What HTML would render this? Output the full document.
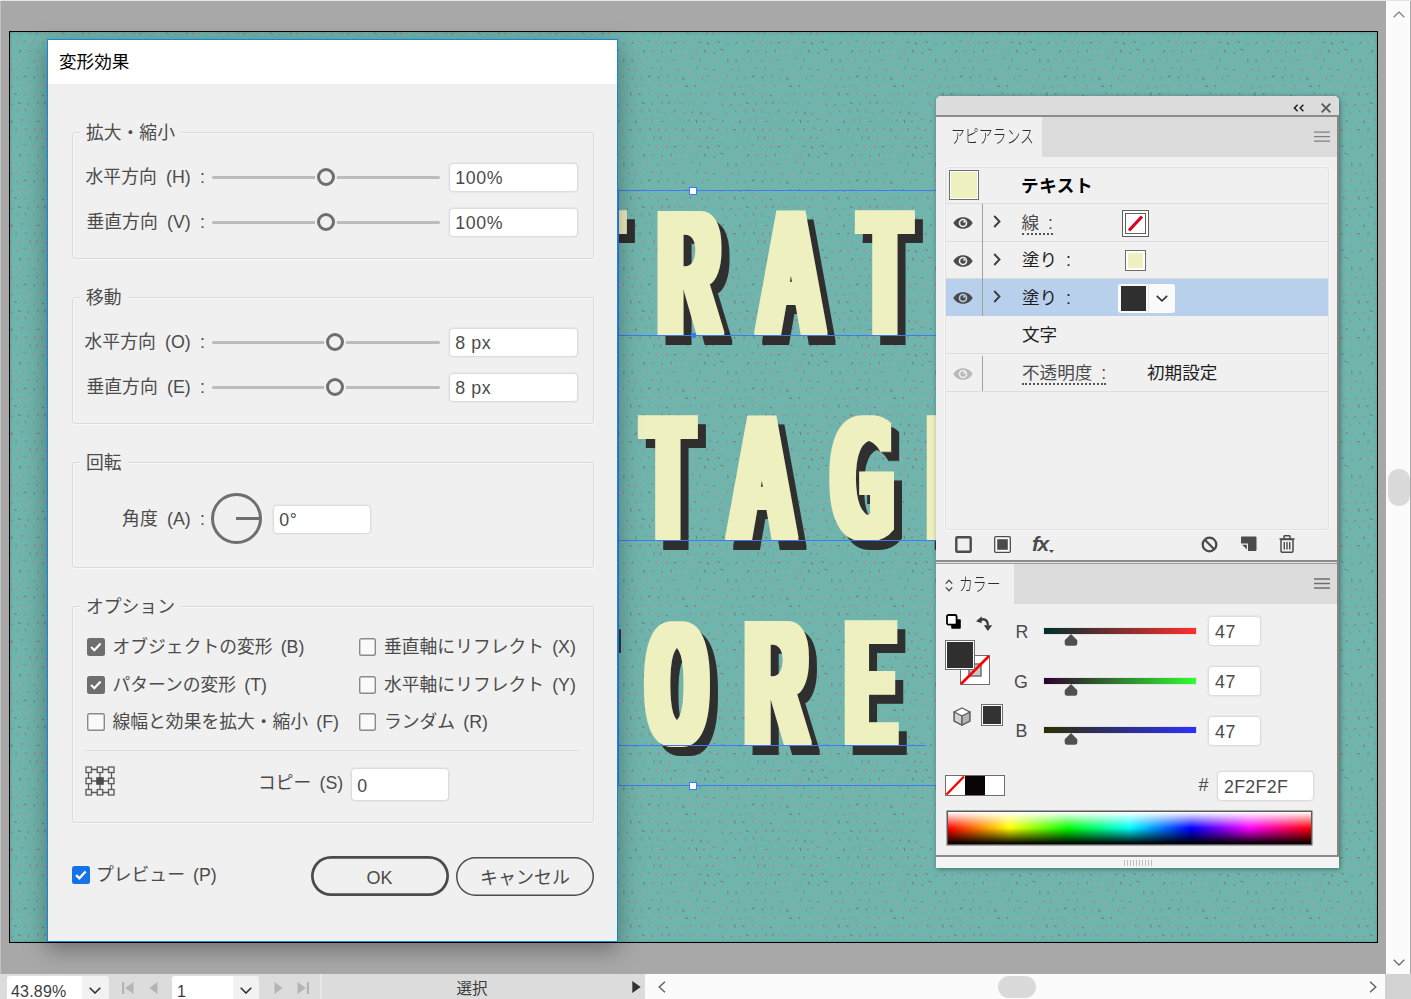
<!DOCTYPE html>
<html lang="ja">
<head>
<meta charset="utf-8">
<title>変形効果</title>
<style>
*{box-sizing:border-box;margin:0;padding:0}
html,body{width:1411px;height:999px;overflow:hidden}
body{position:relative;background:#a8a8a8;font-family:"Liberation Sans","Noto Sans CJK JP",sans-serif;font-size:17.5px;color:#4b4b4b}
.abs,.abs *{position:absolute}
.t{white-space:nowrap;line-height:1}
/* ---------- canvas ---------- */
#canvas{left:9px;top:31px;width:1369px;height:912px;border:1px solid #000;background:#6eb5ad;overflow:hidden}
#canvas svg.tex{left:0;top:0;width:1367px;height:910px}
#canvas .vig{left:0;top:0;width:1367px;height:910px;box-shadow:inset 0 0 3px 0 rgba(40,90,85,.35)}
.word .g{display:block;font-family:"Liberation Sans",sans-serif;font-weight:bold;font-size:176.6px;line-height:176.6px;height:176.6px;color:#eff0c0;white-space:pre;filter:url(#bold)}
.word .g.m{font-family:"DejaVu Sans Mono",monospace;font-size:161px;line-height:161px;height:161px;filter:url(#bold2)}
.word .g i{position:relative;display:block;font-style:normal;transform-origin:0 0}
#letters{left:0;top:0;width:1367px;height:910px}
.gl{height:1px;background:#3d7bf2}
.hd{width:8px;height:8px;background:#fff;border:1px solid #3d7bf2}

/* ---------- dialog ---------- */
#dialog{left:47px;top:39px;width:571px;height:903px;border:1px solid #1a84d8;background:#f0f0f0;box-shadow:0 7px 22px 0 rgba(0,0,0,.36)}
#dtitle{left:0;top:0;width:569px;height:44px;background:#fff}
.grp{left:24px;width:522px;border:1px solid #dadada;border-radius:3px;box-shadow:inset 1px 1px 0 #f8f8f8,1px 1px 0 #f8f8f8}
.leg{left:32px;padding:0 6px;background:#f0f0f0;font-size:17.8px;color:#4b4b4b}
.lbl{font-size:17.8px;color:#4b4b4b;word-spacing:3.2px}
.lbl.r{word-spacing:4.4px}
.lbl.r{right:412px}
.trk{left:164px;width:228px;height:3px;background:#bcbcbc;border-radius:1.5px}
.thumb{width:18px;height:18px;border-radius:50%;border:3px solid #6e6e6e;background:#f0f0f0;box-shadow:0 0 0 2px #f0f0f0}
.inp{width:129px;height:29px;background:#fff;border:1px solid #dcdcdc;border-radius:4px;box-shadow:0 0 0 1px #e8e8e8}
.inp span{left:5.2px;top:6px;font-size:17.8px;color:#4b4b4b;letter-spacing:.6px}
#dial{left:162.5px;top:452.5px;width:51.5px;height:51.5px;border-radius:50%;border:3px solid #6e6e6e}
#dial i{left:22.5px;top:21.2px;width:23px;height:3px;background:#6e6e6e}
.cb{width:17.6px;height:17.6px;box-shadow:inset 0 0 0 1.4px #8a8a8a;border-radius:2.5px;background:#fafafa}
.cb.on{background:#6e6e6e;box-shadow:none}
.cb.blue{background:#1473e6;box-shadow:none;width:18px;height:18px}
.cb svg{left:0;top:0;width:17.6px;height:17.6px}
#sep4{left:37px;top:709.5px;width:494px;height:1.5px;background:#dcdcdc}
#gridic{left:36.7px;top:726px}
.btn{height:40px;border-radius:20px;box-shadow:inset 0 0 0 1.5px #4b4b4b}
.btn span{font-size:18px;color:#4b4b4b}
#ok{left:262.5px;top:816px;width:138px;box-shadow:inset 0 0 0 2.7px #4b4b4b}
#ok span{left:56px;top:13px}
#cancel{left:408px;top:816.5px;width:138px;height:39px}
#cancel span{left:24px;top:12.5px}

/* ---------- panels ---------- */
#panel{left:936px;top:96px;width:403px;height:772px;background:#f0f0f0;border-radius:5px 5px 0 0;box-shadow:1px 1px 5px 0 rgba(0,0,0,.4);color:#1e1e1e}
#pstrip{left:0;top:0;width:403px;height:19px;background:#dcdcdc;border-radius:5px 5px 0 0}
#pcollapse{left:357px;top:7.7px}
#pclose{left:384.5px;top:6.7px}
#pline1{left:0;top:19px;width:403px;height:2px;background:#8c8c8c}
#panel:after{content:"";position:absolute;left:401px;top:19px;width:2px;height:741px;background:#868686}
.tabrow{left:0;width:401.5px;background:#dcdcdc}
.tab{left:0;background:#f0f0f0}
.nar{font-weight:300;font-size:18.6px;transform:scaleX(.745);transform-origin:0 50%;color:#2d2d2d;letter-spacing:0}
.burger{left:378px}
#plist{left:9px;top:70.5px;width:384px;height:363px;border:1px solid #e0e0e0;border-radius:3px;box-shadow:0 0 0 1px #f8f8f8}
#plist>*{margin-left:.5px}
.row{left:0;margin-left:0!important;width:382px;border-bottom:1.5px solid #dcdcdc}
.row.sel{background:#b9d0ed;border-bottom-color:#b9d0ed}
.vsep{left:35.5px;width:1.3px;background:#a0a0a0}
.sw{border:1px solid #6e6e6e}
.pl{font-size:17.6px;color:#1e1e1e}
.pl.b{font-weight:bold;color:#000}
.pl.dot{border-bottom:2px dotted #555;padding-bottom:.5px;word-spacing:4px}
.eye{left:6.5px}
.chev{left:46px;margin-top:-1.3px}
.sw2{width:27px;height:27px}
#selsw{left:171.5px;top:116px;width:57px;height:29px;background:#fafafa;border-radius:3px}
#selsw i{left:2.5px;top:2px;width:25px;height:25px;background:#2f2f2f}
#selsw b{left:30px;top:0;width:1px;height:29px;background:#e6e6e6}
#selsw svg{left:38px;top:11.5px}
#fx{font-family:"Liberation Sans",sans-serif;font-style:italic;font-size:21px;color:#4b4b4b;letter-spacing:-1.5px;font-weight:700;margin-top:2px}
#fx svg{left:17px;top:16.5px}
#pdiv{left:0;top:463.5px;width:403px;height:4.5px;background:linear-gradient(#8c8c8c 0,#8c8c8c 40%,#e6e6e6 40%,#e6e6e6 70%,#9a9a9a 70%)}
#fill{left:9px;top:544px;width:30px;height:30px;background:#2f2f2f;border:1px solid #6e6e6e;box-shadow:inset 0 0 0 1px #fff}
#stroke{left:24px;top:558.5px;width:30px;height:30px}
.ch{margin-top:1.2px;left:79.5px;font-size:17.8px;color:#4b4b4b}
.ctrk{left:107.5px;width:152px;height:6px;box-shadow:0 0 0 1px #e2e2e2}
.cth{left:128px}
.cinp{left:271.5px;width:53px;height:30px;background:#fff;border:1px solid #dcdcdc;border-radius:4px;box-shadow:0 0 0 1px #e8e8e8}
.cinp span{left:6.5px;top:7.3px;font-size:17.8px;color:#4b4b4b;letter-spacing:.6px}
#mini{left:9px;top:679px;width:60px;height:21px}
#spec{left:10.5px;top:714.5px;width:365px;height:34px;border:1px solid #5a5a5a;box-shadow:0 0 0 .5px #5a5a5a;background-clip:padding-box;background:linear-gradient(90deg,#f00 0,#ff0 17%,#0f0 33%,#0ff 50%,#00f 67%,#f0f 83%,#f00 100%)}
#spec i{left:0;top:0;right:0;bottom:0;background:linear-gradient(#fff 0,rgba(255,255,255,0) 50%,rgba(0,0,0,0) 50%,#000 100%)}
#pfoot{left:0;top:758.5px;width:403px;height:13.5px;background:#f4f4f4;border-top:2px solid #8c8c8c}
#pgrip{left:188px;top:763.5px;width:28px;height:6px;background:repeating-linear-gradient(90deg,#bdbdbd 0,#bdbdbd 1px,transparent 1px,transparent 3px)}

/* ---------- chrome ---------- */
#vscroll{left:1386px;top:1px;width:25px;height:973px;background:#fbfbfb;border-right:1px solid #a8a8a8}
#vthumb{left:2px;top:468px;width:21.5px;height:37px;border-radius:10.5px;background:#dadada}
#status{left:0;top:974px;width:1411px;height:25px;background:#dcdcdc}
.sinp{top:1.5px;height:24px;background:#fff;border-radius:3px 0 0 0}
.sinp span{top:8px;font-size:16px;color:#3c3c3c;letter-spacing:.2px}
.sdrop{top:1.5px;height:24px;background:#f2f2f2;border-radius:0 3px 0 0}
#ssep{left:320px;top:0;width:2px;height:25px;background:#e8e8e8}
#hscroll{left:645px;top:0;width:741px;height:25px;background:#fbfbfb}
#hthumb{left:353px;top:1.5px;width:38px;height:22px;border-radius:11px;background:#dadada}
#corner{left:1385px;top:0;width:26px;height:25px;background:#d2d2d2}
</style>
</head>
<body>
<div class="abs" id="topstrip" style="left:0;top:0;width:1411px;height:1px;background:#e4e4e4"></div>
<div class="abs" id="leftstrip" style="left:0;top:1px;width:1px;height:973px;background:#c2c2c2"></div>
<div class="abs" id="canvas">
<svg class="tex" width="1367" height="910">
<defs><pattern id="sp" width="104" height="104" patternUnits="userSpaceOnUse"><g fill="none" stroke-width="1.3" stroke-linecap="round">
<path d="M1.8 0.8l-0.4 0.8" stroke="#93a9a3" stroke-width="3" stroke-opacity="0.74"/>
<path d="M1.6 0.7l-1.6 0.7" stroke="#5b7a76" stroke-width="1.2" stroke-opacity="0.34"/>
<path d="M10.1 1.6l-0.8 0.5" stroke="#93a9a3" stroke-width="3" stroke-opacity="0.60"/>
<path d="M9.3 3.5l0.3 -1.8" stroke="#5b7a76" stroke-width="1.2" stroke-opacity="0.33"/>
<path d="M19.8 1.3l0.8 0.4" stroke="#93a9a3" stroke-width="3" stroke-opacity="0.64"/>
<path d="M20.2 0.4l0.3 1.8" stroke="#5b7a76" stroke-width="1.2" stroke-opacity="0.60"/>
<path d="M26.3 0.5l1.3 1.0" stroke="#93a9a3" stroke-width="3" stroke-opacity="0.69"/>
<path d="M27.2 0.8l-1.1 1.2" stroke="#5b7a76" stroke-width="1.2" stroke-opacity="0.68"/>
<path d="M36.1 1.3l-0.1 1.8" stroke="#93a9a3" stroke-width="3" stroke-opacity="0.83"/>
<path d="M36.3 3.0l-0.7 -0.9" stroke="#5b7a76" stroke-width="1.2" stroke-opacity="0.38"/>
<path d="M45.7 0.2l-0.9 1.5" stroke="#93a9a3" stroke-width="3" stroke-opacity="0.76"/>
<path d="M53.8 1.8l-0.4 1.4" stroke="#93a9a3" stroke-width="3" stroke-opacity="0.71"/>
<path d="M54.2 2.5l-0.9 -1.4" stroke="#5b7a76" stroke-width="1.2" stroke-opacity="0.69"/>
<path d="M63.5 2.9l-1.0 0.6" stroke="#93a9a3" stroke-width="3" stroke-opacity="0.67"/>
<path d="M63.3 2.6l-1.6 -0.1" stroke="#5b7a76" stroke-width="1.2" stroke-opacity="0.33"/>
<path d="M71.5 0.7l0.9 0.9" stroke="#93a9a3" stroke-width="3" stroke-opacity="0.89"/>
<path d="M73.1 0.9l-1.0 1.4" stroke="#5b7a76" stroke-width="1.2" stroke-opacity="0.78"/>
<path d="M79.1 1.0l0.8 1.7" stroke="#93a9a3" stroke-width="3" stroke-opacity="0.93"/>
<path d="M79.3 1.2l-0.6 1.2" stroke="#5b7a76" stroke-width="1.2" stroke-opacity="0.62"/>
<path d="M87.9 0.2l0.3 1.2" stroke="#93a9a3" stroke-width="3" stroke-opacity="0.75"/>
<path d="M98.1 1.3l-0.6 1.5" stroke="#93a9a3" stroke-width="3" stroke-opacity="0.52"/>
<path d="M7.5 11.2l-1.0 0.8" stroke="#93a9a3" stroke-width="3" stroke-opacity="0.68"/>
<path d="M6.6 11.6l-0.5 -1.0" stroke="#5b7a76" stroke-width="1.2" stroke-opacity="0.39"/>
<path d="M14.1 9.6l1.0 0.0" stroke="#93a9a3" stroke-width="3" stroke-opacity="0.55"/>
<path d="M13.9 8.4l1.8 1.3" stroke="#5b7a76" stroke-width="1.2" stroke-opacity="0.44"/>
<path d="M22.5 10.0l1.7 0.7" stroke="#93a9a3" stroke-width="3" stroke-opacity="0.95"/>
<path d="M22.8 9.6l-0.3 1.1" stroke="#5b7a76" stroke-width="1.2" stroke-opacity="0.45"/>
<path d="M32.2 9.8l1.9 0.1" stroke="#93a9a3" stroke-width="3" stroke-opacity="0.74"/>
<path d="M33.2 10.1l-0.1 1.0" stroke="#5b7a76" stroke-width="1.2" stroke-opacity="0.77"/>
<path d="M41.3 9.6l0.4 0.9" stroke="#93a9a3" stroke-width="3" stroke-opacity="0.85"/>
<path d="M41.8 10.6l-1.5 -0.0" stroke="#5b7a76" stroke-width="1.2" stroke-opacity="0.84"/>
<path d="M51.2 10.9l-1.4 0.9" stroke="#93a9a3" stroke-width="3" stroke-opacity="0.60"/>
<path d="M50.2 11.4l-0.8 -0.6" stroke="#5b7a76" stroke-width="1.2" stroke-opacity="0.44"/>
<path d="M58.6 10.8l0.3 1.9" stroke="#93a9a3" stroke-width="3" stroke-opacity="0.94"/>
<path d="M66.3 9.7l0.8 0.7" stroke="#93a9a3" stroke-width="3" stroke-opacity="0.59"/>
<path d="M67.7 10.0l-2.1 0.5" stroke="#5b7a76" stroke-width="1.2" stroke-opacity="0.74"/>
<path d="M75.5 10.8l-1.7 0.5" stroke="#93a9a3" stroke-width="3" stroke-opacity="0.84"/>
<path d="M75.2 12.2l-1.7 -1.3" stroke="#5b7a76" stroke-width="1.2" stroke-opacity="0.83"/>
<path d="M84.9 10.3l-1.6 0.3" stroke="#93a9a3" stroke-width="3" stroke-opacity="0.58"/>
<path d="M85.4 10.6l-1.7 -1.5" stroke="#5b7a76" stroke-width="1.2" stroke-opacity="0.75"/>
<path d="M93.8 10.4l0.7 1.3" stroke="#93a9a3" stroke-width="3" stroke-opacity="0.56"/>
<path d="M95.1 12.0l-1.8 -0.6" stroke="#5b7a76" stroke-width="1.2" stroke-opacity="0.54"/>
<path d="M102.1 11.1l0.9 0.7" stroke="#93a9a3" stroke-width="3" stroke-opacity="0.63"/>
<path d="M102.9 10.4l-0.9 1.0" stroke="#5b7a76" stroke-width="1.2" stroke-opacity="0.80"/>
<path d="M1.9 18.3l-0.5 1.8" stroke="#93a9a3" stroke-width="3" stroke-opacity="0.69"/>
<path d="M10.7 19.0l-0.1 0.8" stroke="#93a9a3" stroke-width="3" stroke-opacity="0.70"/>
<path d="M10.8 18.5l-1.3 1.6" stroke="#5b7a76" stroke-width="1.2" stroke-opacity="0.70"/>
<path d="M19.5 18.2l-0.1 1.5" stroke="#93a9a3" stroke-width="3" stroke-opacity="0.85"/>
<path d="M19.8 19.4l-1.3 -0.1" stroke="#5b7a76" stroke-width="1.2" stroke-opacity="0.58"/>
<path d="M28.8 19.8l-1.3 0.4" stroke="#93a9a3" stroke-width="3" stroke-opacity="0.78"/>
<path d="M28.4 20.9l-0.6 -1.9" stroke="#5b7a76" stroke-width="1.2" stroke-opacity="0.56"/>
<path d="M38.6 19.4l-1.8 0.7" stroke="#93a9a3" stroke-width="3" stroke-opacity="0.62"/>
<path d="M36.8 20.2l0.7 -2.1" stroke="#5b7a76" stroke-width="1.2" stroke-opacity="0.54"/>
<path d="M43.5 18.5l1.6 0.4" stroke="#93a9a3" stroke-width="3" stroke-opacity="0.85"/>
<path d="M53.4 19.4l-0.5 0.9" stroke="#93a9a3" stroke-width="3" stroke-opacity="0.90"/>
<path d="M61.8 19.8l0.4 1.3" stroke="#93a9a3" stroke-width="3" stroke-opacity="0.95"/>
<path d="M62.5 19.5l-0.9 1.3" stroke="#5b7a76" stroke-width="1.2" stroke-opacity="0.41"/>
<path d="M70.2 19.8l1.5 0.1" stroke="#93a9a3" stroke-width="3" stroke-opacity="0.70"/>
<path d="M70.6 18.3l0.6 1.8" stroke="#5b7a76" stroke-width="1.2" stroke-opacity="0.84"/>
<path d="M80.2 20.3l1.1 0.4" stroke="#93a9a3" stroke-width="3" stroke-opacity="0.52"/>
<path d="M80.5 20.5l0.2 1.2" stroke="#5b7a76" stroke-width="1.2" stroke-opacity="0.75"/>
<path d="M88.8 18.3l-1.4 0.4" stroke="#93a9a3" stroke-width="3" stroke-opacity="0.82"/>
<path d="M88.9 18.2l-1.8 -0.9" stroke="#5b7a76" stroke-width="1.2" stroke-opacity="0.82"/>
<path d="M96.8 19.8l1.8 0.5" stroke="#93a9a3" stroke-width="3" stroke-opacity="0.53"/>
<path d="M6.4 26.7l-0.3 1.9" stroke="#93a9a3" stroke-width="3" stroke-opacity="0.62"/>
<path d="M6.3 27.2l-1.3 -0.2" stroke="#5b7a76" stroke-width="1.2" stroke-opacity="0.33"/>
<path d="M13.8 26.8l1.0 1.4" stroke="#93a9a3" stroke-width="3" stroke-opacity="0.63"/>
<path d="M13.7 26.4l-0.4 1.4" stroke="#5b7a76" stroke-width="1.2" stroke-opacity="0.31"/>
<path d="M23.7 27.7l1.1 0.8" stroke="#93a9a3" stroke-width="3" stroke-opacity="0.92"/>
<path d="M24.9 28.3l-1.4 0.7" stroke="#5b7a76" stroke-width="1.2" stroke-opacity="0.52"/>
<path d="M33.0 28.4l-1.2 0.1" stroke="#93a9a3" stroke-width="3" stroke-opacity="0.87"/>
<path d="M32.0 28.5l0.2 -1.6" stroke="#5b7a76" stroke-width="1.2" stroke-opacity="0.37"/>
<path d="M39.6 28.2l0.7 0.7" stroke="#93a9a3" stroke-width="3" stroke-opacity="0.54"/>
<path d="M40.6 28.0l-1.9 0.3" stroke="#5b7a76" stroke-width="1.2" stroke-opacity="0.46"/>
<path d="M49.5 26.6l0.2 1.1" stroke="#93a9a3" stroke-width="3" stroke-opacity="0.93"/>
<path d="M59.0 27.3l-1.2 0.1" stroke="#93a9a3" stroke-width="3" stroke-opacity="0.66"/>
<path d="M58.8 27.7l-0.6 -1.5" stroke="#5b7a76" stroke-width="1.2" stroke-opacity="0.58"/>
<path d="M65.2 27.3l1.2 0.4" stroke="#93a9a3" stroke-width="3" stroke-opacity="0.52"/>
<path d="M65.9 26.8l0.2 1.3" stroke="#5b7a76" stroke-width="1.2" stroke-opacity="0.71"/>
<path d="M76.6 28.3l-1.2 0.5" stroke="#93a9a3" stroke-width="3" stroke-opacity="0.65"/>
<path d="M83.7 28.2l-0.4 0.8" stroke="#93a9a3" stroke-width="3" stroke-opacity="0.88"/>
<path d="M93.7 28.3l-0.8 0.5" stroke="#93a9a3" stroke-width="3" stroke-opacity="0.74"/>
<path d="M93.9 29.8l-0.1 -2.1" stroke="#5b7a76" stroke-width="1.2" stroke-opacity="0.79"/>
<path d="M101.8 28.2l0.6 0.6" stroke="#93a9a3" stroke-width="3" stroke-opacity="0.56"/>
<path d="M102.1 27.6l0.1 2.2" stroke="#5b7a76" stroke-width="1.2" stroke-opacity="0.64"/>
<path d="M1.6 36.6l1.8 0.0" stroke="#93a9a3" stroke-width="3" stroke-opacity="0.84"/>
<path d="M1.7 36.1l-0.0 1.9" stroke="#5b7a76" stroke-width="1.2" stroke-opacity="0.44"/>
<path d="M10.0 35.7l-0.7 0.8" stroke="#93a9a3" stroke-width="3" stroke-opacity="0.83"/>
<path d="M19.3 35.6l0.1 1.6" stroke="#93a9a3" stroke-width="3" stroke-opacity="0.85"/>
<path d="M19.3 36.1l-1.1 -0.1" stroke="#5b7a76" stroke-width="1.2" stroke-opacity="0.71"/>
<path d="M27.1 36.8l0.9 0.0" stroke="#93a9a3" stroke-width="3" stroke-opacity="0.62"/>
<path d="M27.5 35.9l-0.6 1.9" stroke="#5b7a76" stroke-width="1.2" stroke-opacity="0.56"/>
<path d="M37.1 35.6l-1.0 0.3" stroke="#93a9a3" stroke-width="3" stroke-opacity="0.94"/>
<path d="M45.0 36.0l-1.7 1.1" stroke="#93a9a3" stroke-width="3" stroke-opacity="0.70"/>
<path d="M44.8 37.2l-2.1 -0.9" stroke="#5b7a76" stroke-width="1.2" stroke-opacity="0.38"/>
<path d="M53.2 37.4l1.6 0.7" stroke="#93a9a3" stroke-width="3" stroke-opacity="0.73"/>
<path d="M63.8 35.8l-1.3 0.4" stroke="#93a9a3" stroke-width="3" stroke-opacity="0.51"/>
<path d="M63.2 36.2l-0.6 -1.5" stroke="#5b7a76" stroke-width="1.2" stroke-opacity="0.49"/>
<path d="M70.0 37.5l1.7 0.0" stroke="#93a9a3" stroke-width="3" stroke-opacity="0.88"/>
<path d="M72.2 36.4l-1.3 1.5" stroke="#5b7a76" stroke-width="1.2" stroke-opacity="0.50"/>
<path d="M79.9 37.3l-0.3 1.2" stroke="#93a9a3" stroke-width="3" stroke-opacity="0.69"/>
<path d="M80.7 37.2l-0.9 0.6" stroke="#5b7a76" stroke-width="1.2" stroke-opacity="0.81"/>
<path d="M88.1 35.6l-0.0 1.0" stroke="#93a9a3" stroke-width="3" stroke-opacity="0.67"/>
<path d="M98.6 36.5l-0.8 1.7" stroke="#93a9a3" stroke-width="3" stroke-opacity="0.92"/>
<path d="M99.0 37.7l-0.8 -0.7" stroke="#5b7a76" stroke-width="1.2" stroke-opacity="0.71"/>
<path d="M5.7 44.7l1.9 0.3" stroke="#93a9a3" stroke-width="3" stroke-opacity="0.56"/>
<path d="M6.9 44.9l0.3 1.4" stroke="#5b7a76" stroke-width="1.2" stroke-opacity="0.44"/>
<path d="M15.5 44.2l-0.2 1.3" stroke="#93a9a3" stroke-width="3" stroke-opacity="0.58"/>
<path d="M16.4 43.9l-2.1 0.9" stroke="#5b7a76" stroke-width="1.2" stroke-opacity="0.80"/>
<path d="M24.4 45.0l0.9 0.4" stroke="#93a9a3" stroke-width="3" stroke-opacity="0.54"/>
<path d="M24.2 44.7l0.5 1.2" stroke="#5b7a76" stroke-width="1.2" stroke-opacity="0.79"/>
<path d="M32.7 44.4l0.4 1.4" stroke="#93a9a3" stroke-width="3" stroke-opacity="0.67"/>
<path d="M34.0 43.9l-0.6 1.3" stroke="#5b7a76" stroke-width="1.2" stroke-opacity="0.58"/>
<path d="M40.9 45.9l0.9 0.7" stroke="#93a9a3" stroke-width="3" stroke-opacity="0.61"/>
<path d="M42.4 45.8l-1.1 2.0" stroke="#5b7a76" stroke-width="1.2" stroke-opacity="0.31"/>
<path d="M49.2 45.6l-1.3 0.4" stroke="#93a9a3" stroke-width="3" stroke-opacity="0.76"/>
<path d="M49.7 47.4l-1.3 -1.9" stroke="#5b7a76" stroke-width="1.2" stroke-opacity="0.83"/>
<path d="M57.1 44.1l1.3 0.7" stroke="#93a9a3" stroke-width="3" stroke-opacity="0.81"/>
<path d="M68.0 45.2l-1.0 0.9" stroke="#93a9a3" stroke-width="3" stroke-opacity="0.75"/>
<path d="M68.4 46.6l-0.4 -1.3" stroke="#5b7a76" stroke-width="1.2" stroke-opacity="0.47"/>
<path d="M75.1 44.0l-0.7 1.5" stroke="#93a9a3" stroke-width="3" stroke-opacity="0.55"/>
<path d="M75.4 44.7l-1.7 -0.7" stroke="#5b7a76" stroke-width="1.2" stroke-opacity="0.63"/>
<path d="M83.0 43.9l0.2 1.9" stroke="#93a9a3" stroke-width="3" stroke-opacity="0.79"/>
<path d="M92.2 44.0l1.4 1.4" stroke="#93a9a3" stroke-width="3" stroke-opacity="0.82"/>
<path d="M93.1 43.7l0.3 1.7" stroke="#5b7a76" stroke-width="1.2" stroke-opacity="0.44"/>
<path d="M101.8 46.1l0.6 0.5" stroke="#93a9a3" stroke-width="3" stroke-opacity="0.65"/>
<path d="M103.1 46.4l-1.1 0.7" stroke="#5b7a76" stroke-width="1.2" stroke-opacity="0.58"/>
<path d="M0.8 54.4l1.0 1.5" stroke="#93a9a3" stroke-width="3" stroke-opacity="0.60"/>
<path d="M2.7 55.0l-1.4 0.3" stroke="#5b7a76" stroke-width="1.2" stroke-opacity="0.40"/>
<path d="M10.5 53.0l-1.0 1.7" stroke="#93a9a3" stroke-width="3" stroke-opacity="0.57"/>
<path d="M10.6 53.0l-2.4 0.2" stroke="#5b7a76" stroke-width="1.2" stroke-opacity="0.33"/>
<path d="M19.9 54.7l-1.6 0.6" stroke="#93a9a3" stroke-width="3" stroke-opacity="0.95"/>
<path d="M28.4 53.1l-1.7 0.3" stroke="#93a9a3" stroke-width="3" stroke-opacity="0.51"/>
<path d="M27.7 53.4l-0.7 -1.3" stroke="#5b7a76" stroke-width="1.2" stroke-opacity="0.30"/>
<path d="M36.6 53.6l-0.9 0.1" stroke="#93a9a3" stroke-width="3" stroke-opacity="0.93"/>
<path d="M37.1 54.5l-1.0 -1.9" stroke="#5b7a76" stroke-width="1.2" stroke-opacity="0.33"/>
<path d="M45.8 53.6l-1.0 0.3" stroke="#93a9a3" stroke-width="3" stroke-opacity="0.66"/>
<path d="M53.6 53.3l-1.4 1.0" stroke="#93a9a3" stroke-width="3" stroke-opacity="0.52"/>
<path d="M53.6 54.3l-2.3 -0.3" stroke="#5b7a76" stroke-width="1.2" stroke-opacity="0.79"/>
<path d="M63.0 53.4l-1.5 0.2" stroke="#93a9a3" stroke-width="3" stroke-opacity="0.62"/>
<path d="M61.8 54.5l-0.7 -1.2" stroke="#5b7a76" stroke-width="1.2" stroke-opacity="0.80"/>
<path d="M71.1 55.0l1.1 0.1" stroke="#93a9a3" stroke-width="3" stroke-opacity="0.71"/>
<path d="M80.6 53.3l0.9 0.9" stroke="#93a9a3" stroke-width="3" stroke-opacity="0.72"/>
<path d="M88.5 54.1l-1.2 1.3" stroke="#93a9a3" stroke-width="3" stroke-opacity="0.85"/>
<path d="M88.4 55.4l-1.4 -0.5" stroke="#5b7a76" stroke-width="1.2" stroke-opacity="0.34"/>
<path d="M96.3 54.3l0.6 0.6" stroke="#93a9a3" stroke-width="3" stroke-opacity="0.52"/>
<path d="M97.7 54.3l-0.9 2.2" stroke="#5b7a76" stroke-width="1.2" stroke-opacity="0.45"/>
<path d="M5.3 60.9l0.0 1.7" stroke="#93a9a3" stroke-width="3" stroke-opacity="0.70"/>
<path d="M6.5 61.9l-1.8 0.4" stroke="#5b7a76" stroke-width="1.2" stroke-opacity="0.77"/>
<path d="M15.9 61.5l-1.0 0.6" stroke="#93a9a3" stroke-width="3" stroke-opacity="0.76"/>
<path d="M15.1 62.0l-0.2 -1.3" stroke="#5b7a76" stroke-width="1.2" stroke-opacity="0.38"/>
<path d="M24.3 62.3l0.7 1.1" stroke="#93a9a3" stroke-width="3" stroke-opacity="0.95"/>
<path d="M25.3 62.7l-1.0 1.9" stroke="#5b7a76" stroke-width="1.2" stroke-opacity="0.36"/>
<path d="M33.1 63.0l-1.7 0.9" stroke="#93a9a3" stroke-width="3" stroke-opacity="0.52"/>
<path d="M33.6 63.8l-1.2 -0.4" stroke="#5b7a76" stroke-width="1.2" stroke-opacity="0.81"/>
<path d="M40.6 63.0l0.2 1.1" stroke="#93a9a3" stroke-width="3" stroke-opacity="0.85"/>
<path d="M48.9 62.4l-0.4 1.0" stroke="#93a9a3" stroke-width="3" stroke-opacity="0.67"/>
<path d="M49.5 63.0l-1.3 0.3" stroke="#5b7a76" stroke-width="1.2" stroke-opacity="0.41"/>
<path d="M57.4 61.8l-0.5 0.9" stroke="#93a9a3" stroke-width="3" stroke-opacity="0.64"/>
<path d="M56.9 62.4l-0.9 -1.5" stroke="#5b7a76" stroke-width="1.2" stroke-opacity="0.52"/>
<path d="M66.6 62.9l1.0 0.3" stroke="#93a9a3" stroke-width="3" stroke-opacity="0.81"/>
<path d="M67.7 62.0l0.2 1.4" stroke="#5b7a76" stroke-width="1.2" stroke-opacity="0.61"/>
<path d="M76.2 62.1l-1.8 0.8" stroke="#93a9a3" stroke-width="3" stroke-opacity="0.66"/>
<path d="M74.6 63.7l-0.1 -1.3" stroke="#5b7a76" stroke-width="1.2" stroke-opacity="0.53"/>
<path d="M85.7 62.2l-1.3 0.5" stroke="#93a9a3" stroke-width="3" stroke-opacity="0.57"/>
<path d="M86.1 62.7l-0.6 -1.8" stroke="#5b7a76" stroke-width="1.2" stroke-opacity="0.64"/>
<path d="M92.2 62.4l1.0 0.5" stroke="#93a9a3" stroke-width="3" stroke-opacity="0.73"/>
<path d="M101.5 62.1l-1.6 1.1" stroke="#93a9a3" stroke-width="3" stroke-opacity="0.59"/>
<path d="M100.6 63.1l0.3 -2.4" stroke="#5b7a76" stroke-width="1.2" stroke-opacity="0.81"/>
<path d="M2.1 71.5l-0.7 1.7" stroke="#93a9a3" stroke-width="3" stroke-opacity="0.57"/>
<path d="M3.1 72.7l-1.5 0.3" stroke="#5b7a76" stroke-width="1.2" stroke-opacity="0.40"/>
<path d="M10.0 70.5l-0.1 1.3" stroke="#93a9a3" stroke-width="3" stroke-opacity="0.56"/>
<path d="M10.3 71.6l-2.1 -0.9" stroke="#5b7a76" stroke-width="1.2" stroke-opacity="0.72"/>
<path d="M17.5 71.9l1.4 0.5" stroke="#93a9a3" stroke-width="3" stroke-opacity="0.75"/>
<path d="M18.3 71.2l0.1 1.6" stroke="#5b7a76" stroke-width="1.2" stroke-opacity="0.66"/>
<path d="M27.1 71.1l1.5 0.1" stroke="#93a9a3" stroke-width="3" stroke-opacity="0.72"/>
<path d="M28.3 69.7l-1.0 1.9" stroke="#5b7a76" stroke-width="1.2" stroke-opacity="0.56"/>
<path d="M35.6 70.0l0.2 0.9" stroke="#93a9a3" stroke-width="3" stroke-opacity="0.70"/>
<path d="M35.5 70.0l-0.8 1.7" stroke="#5b7a76" stroke-width="1.2" stroke-opacity="0.73"/>
<path d="M45.4 69.6l-0.0 1.3" stroke="#93a9a3" stroke-width="3" stroke-opacity="0.93"/>
<path d="M46.7 71.4l-2.0 -1.3" stroke="#5b7a76" stroke-width="1.2" stroke-opacity="0.41"/>
<path d="M56.1 71.2l-1.9 0.3" stroke="#93a9a3" stroke-width="3" stroke-opacity="0.57"/>
<path d="M54.6 72.2l0.6 -0.9" stroke="#5b7a76" stroke-width="1.2" stroke-opacity="0.39"/>
<path d="M64.0 70.5l-0.8 0.5" stroke="#93a9a3" stroke-width="3" stroke-opacity="0.73"/>
<path d="M70.6 70.2l-0.0 1.2" stroke="#93a9a3" stroke-width="3" stroke-opacity="0.52"/>
<path d="M71.8 70.7l-1.8 1.4" stroke="#5b7a76" stroke-width="1.2" stroke-opacity="0.39"/>
<path d="M80.8 69.6l-0.2 1.6" stroke="#93a9a3" stroke-width="3" stroke-opacity="0.66"/>
<path d="M89.2 71.4l-0.9 0.3" stroke="#93a9a3" stroke-width="3" stroke-opacity="0.95"/>
<path d="M89.0 73.2l-1.2 -1.7" stroke="#5b7a76" stroke-width="1.2" stroke-opacity="0.62"/>
<path d="M96.9 71.5l0.2 1.0" stroke="#93a9a3" stroke-width="3" stroke-opacity="0.83"/>
<path d="M97.9 73.0l-1.3 -0.4" stroke="#5b7a76" stroke-width="1.2" stroke-opacity="0.62"/>
<path d="M6.3 79.5l0.8 0.0" stroke="#93a9a3" stroke-width="3" stroke-opacity="0.57"/>
<path d="M7.2 78.1l0.3 1.7" stroke="#5b7a76" stroke-width="1.2" stroke-opacity="0.42"/>
<path d="M14.8 78.8l1.2 0.0" stroke="#93a9a3" stroke-width="3" stroke-opacity="0.55"/>
<path d="M15.0 77.6l1.0 1.5" stroke="#5b7a76" stroke-width="1.2" stroke-opacity="0.64"/>
<path d="M24.1 79.0l-1.1 0.2" stroke="#93a9a3" stroke-width="3" stroke-opacity="0.57"/>
<path d="M24.1 80.1l-0.0 -2.2" stroke="#5b7a76" stroke-width="1.2" stroke-opacity="0.45"/>
<path d="M31.3 79.7l-0.2 1.2" stroke="#93a9a3" stroke-width="3" stroke-opacity="0.79"/>
<path d="M31.4 81.8l-1.2 -1.6" stroke="#5b7a76" stroke-width="1.2" stroke-opacity="0.32"/>
<path d="M40.8 79.5l0.6 0.6" stroke="#93a9a3" stroke-width="3" stroke-opacity="0.85"/>
<path d="M41.3 78.5l-1.6 1.7" stroke="#5b7a76" stroke-width="1.2" stroke-opacity="0.63"/>
<path d="M50.1 80.1l-0.8 0.6" stroke="#93a9a3" stroke-width="3" stroke-opacity="0.64"/>
<path d="M51.3 80.8l-2.2 -0.2" stroke="#5b7a76" stroke-width="1.2" stroke-opacity="0.30"/>
<path d="M59.1 79.7l0.2 1.7" stroke="#93a9a3" stroke-width="3" stroke-opacity="0.70"/>
<path d="M58.8 79.8l-0.8 1.0" stroke="#5b7a76" stroke-width="1.2" stroke-opacity="0.71"/>
<path d="M67.8 80.4l-0.7 0.9" stroke="#93a9a3" stroke-width="3" stroke-opacity="0.75"/>
<path d="M67.5 81.8l-0.8 -1.6" stroke="#5b7a76" stroke-width="1.2" stroke-opacity="0.83"/>
<path d="M74.4 80.9l1.1 0.1" stroke="#93a9a3" stroke-width="3" stroke-opacity="0.61"/>
<path d="M75.4 80.8l-1.4 1.5" stroke="#5b7a76" stroke-width="1.2" stroke-opacity="0.48"/>
<path d="M84.0 80.2l-0.7 1.5" stroke="#93a9a3" stroke-width="3" stroke-opacity="0.80"/>
<path d="M93.5 80.1l-1.1 1.5" stroke="#93a9a3" stroke-width="3" stroke-opacity="0.70"/>
<path d="M93.0 81.5l-1.1 -0.9" stroke="#5b7a76" stroke-width="1.2" stroke-opacity="0.34"/>
<path d="M102.2 79.1l0.9 0.1" stroke="#93a9a3" stroke-width="3" stroke-opacity="0.92"/>
<path d="M101.6 79.0l0.6 0.8" stroke="#5b7a76" stroke-width="1.2" stroke-opacity="0.65"/>
<path d="M1.7 89.1l1.5 0.3" stroke="#93a9a3" stroke-width="3" stroke-opacity="0.66"/>
<path d="M2.5 89.0l-1.5 1.7" stroke="#5b7a76" stroke-width="1.2" stroke-opacity="0.80"/>
<path d="M11.4 87.4l0.7 0.6" stroke="#93a9a3" stroke-width="3" stroke-opacity="0.52"/>
<path d="M13.1 87.5l-1.7 0.8" stroke="#5b7a76" stroke-width="1.2" stroke-opacity="0.46"/>
<path d="M18.8 87.3l-0.8 0.7" stroke="#93a9a3" stroke-width="3" stroke-opacity="0.64"/>
<path d="M18.7 88.0l-1.3 0.2" stroke="#5b7a76" stroke-width="1.2" stroke-opacity="0.50"/>
<path d="M27.6 88.9l-0.0 1.8" stroke="#93a9a3" stroke-width="3" stroke-opacity="0.78"/>
<path d="M28.8 89.4l-1.6 0.3" stroke="#5b7a76" stroke-width="1.2" stroke-opacity="0.69"/>
<path d="M37.2 87.8l-0.8 0.4" stroke="#93a9a3" stroke-width="3" stroke-opacity="0.87"/>
<path d="M37.8 88.9l-1.3 -0.2" stroke="#5b7a76" stroke-width="1.2" stroke-opacity="0.30"/>
<path d="M45.7 88.3l-0.8 0.6" stroke="#93a9a3" stroke-width="3" stroke-opacity="0.72"/>
<path d="M46.1 89.0l-0.2 -1.4" stroke="#5b7a76" stroke-width="1.2" stroke-opacity="0.42"/>
<path d="M53.7 88.4l1.5 0.5" stroke="#93a9a3" stroke-width="3" stroke-opacity="0.54"/>
<path d="M55.3 87.6l-1.2 1.7" stroke="#5b7a76" stroke-width="1.2" stroke-opacity="0.52"/>
<path d="M61.5 89.4l1.8 0.5" stroke="#93a9a3" stroke-width="3" stroke-opacity="0.51"/>
<path d="M62.2 88.3l0.5 2.2" stroke="#5b7a76" stroke-width="1.2" stroke-opacity="0.79"/>
<path d="M70.8 87.7l-0.2 1.7" stroke="#93a9a3" stroke-width="3" stroke-opacity="0.84"/>
<path d="M70.8 88.9l-1.4 0.4" stroke="#5b7a76" stroke-width="1.2" stroke-opacity="0.66"/>
<path d="M80.4 87.0l0.3 1.7" stroke="#93a9a3" stroke-width="3" stroke-opacity="0.76"/>
<path d="M81.2 87.0l-2.1 0.7" stroke="#5b7a76" stroke-width="1.2" stroke-opacity="0.47"/>
<path d="M88.7 89.3l0.9 0.5" stroke="#93a9a3" stroke-width="3" stroke-opacity="0.61"/>
<path d="M89.1 88.4l-0.5 1.1" stroke="#5b7a76" stroke-width="1.2" stroke-opacity="0.84"/>
<path d="M98.3 87.7l-0.9 0.1" stroke="#93a9a3" stroke-width="3" stroke-opacity="0.67"/>
<path d="M6.9 97.4l0.2 1.0" stroke="#93a9a3" stroke-width="3" stroke-opacity="0.79"/>
<path d="M6.8 97.2l-1.1 1.1" stroke="#5b7a76" stroke-width="1.2" stroke-opacity="0.74"/>
<path d="M15.7 96.7l-0.5 1.2" stroke="#93a9a3" stroke-width="3" stroke-opacity="0.56"/>
<path d="M17.1 97.4l-2.0 -0.4" stroke="#5b7a76" stroke-width="1.2" stroke-opacity="0.62"/>
<path d="M23.6 96.6l1.3 1.1" stroke="#93a9a3" stroke-width="3" stroke-opacity="0.90"/>
<path d="M25.5 96.8l-1.9 1.2" stroke="#5b7a76" stroke-width="1.2" stroke-opacity="0.55"/>
<path d="M31.3 97.4l1.2 0.4" stroke="#93a9a3" stroke-width="3" stroke-opacity="0.85"/>
<path d="M32.1 97.0l-0.6 1.2" stroke="#5b7a76" stroke-width="1.2" stroke-opacity="0.64"/>
<path d="M41.3 97.6l-1.0 0.2" stroke="#93a9a3" stroke-width="3" stroke-opacity="0.79"/>
<path d="M41.9 97.8l-0.8 -1.5" stroke="#5b7a76" stroke-width="1.2" stroke-opacity="0.60"/>
<path d="M49.6 97.9l-1.4 0.3" stroke="#93a9a3" stroke-width="3" stroke-opacity="0.55"/>
<path d="M49.1 99.2l-0.4 -2.0" stroke="#5b7a76" stroke-width="1.2" stroke-opacity="0.76"/>
<path d="M58.9 97.0l-1.0 0.2" stroke="#93a9a3" stroke-width="3" stroke-opacity="0.81"/>
<path d="M59.0 97.5l0.3 -1.1" stroke="#5b7a76" stroke-width="1.2" stroke-opacity="0.33"/>
<path d="M65.8 97.1l1.3 0.1" stroke="#93a9a3" stroke-width="3" stroke-opacity="0.69"/>
<path d="M65.8 96.8l0.4 1.3" stroke="#5b7a76" stroke-width="1.2" stroke-opacity="0.82"/>
<path d="M76.2 96.3l-1.0 0.7" stroke="#93a9a3" stroke-width="3" stroke-opacity="0.60"/>
<path d="M76.2 97.7l-0.4 -2.1" stroke="#5b7a76" stroke-width="1.2" stroke-opacity="0.61"/>
<path d="M83.3 97.7l0.7 1.4" stroke="#93a9a3" stroke-width="3" stroke-opacity="0.87"/>
<path d="M84.3 97.5l-1.2 0.8" stroke="#5b7a76" stroke-width="1.2" stroke-opacity="0.76"/>
<path d="M92.2 97.7l0.8 0.9" stroke="#93a9a3" stroke-width="3" stroke-opacity="0.61"/>
<path d="M93.1 97.3l-0.2 1.0" stroke="#5b7a76" stroke-width="1.2" stroke-opacity="0.43"/>
<path d="M101.0 96.5l0.3 1.5" stroke="#93a9a3" stroke-width="3" stroke-opacity="0.80"/>
<path d="M101.5 98.3l-2.0 -1.0" stroke="#5b7a76" stroke-width="1.2" stroke-opacity="0.80"/>
</g></pattern></defs>
<filter id="bold" x="-15%" y="-10%" width="135%" height="125%" color-interpolation-filters="sRGB"><feMorphology operator="dilate" radius="6.5 1.5" result="d"/><feFlood flood-color="#2f2f2f"/><feComposite operator="in" in2="d"/><feOffset dx="8" dy="9" result="s"/><feMerge><feMergeNode in="s"/><feMergeNode in="d"/></feMerge></filter>
<filter id="bold2" x="-15%" y="-10%" width="135%" height="125%" color-interpolation-filters="sRGB"><feMorphology operator="dilate" radius="4.5 1.5" result="d"/><feFlood flood-color="#2f2f2f"/><feComposite operator="in" in2="d"/><feOffset dx="8" dy="9" result="s"/><feMerge><feMergeNode in="s"/><feMergeNode in="d"/></feMerge></filter>
<rect width="1367" height="910" fill="url(#sp)"/>
</svg>
<div class="vig"></div>
<div id="letters">
<div class="word"><span class="g" style="left:192.31px;top:153.21px"><i style="transform:scaleX(0.3539)">I</i></span><span class="g" style="left:241.28px;top:153.21px"><i style="transform:scaleX(0.4415)">L</i></span><span class="g" style="left:321.28px;top:153.21px"><i style="transform:scaleX(0.4415)">L</i></span><span class="g m" style="left:398.97px;top:161.67px"><i style="transform:scaleX(0.6384)">U</i></span><span class="g m" style="left:482.66px;top:164.69px"><i style="transform:scaleX(0.6743)">S</i></span><span class="g" style="left:563.04px;top:153.21px"><i style="transform:scaleX(0.4422)">T</i></span><span class="g" style="left:649.13px;top:153.21px"><i style="transform:scaleX(0.4708)">R</i></span><span class="g" style="left:748.89px;top:153.21px"><i style="transform:scaleX(0.5013)">A</i></span><span class="g" style="left:850.64px;top:153.21px"><i style="transform:scaleX(0.4422)">T</i></span><span class="g m" style="left:934.58px;top:164.69px"><i style="transform:scaleX(0.6793)">O</i></span><span class="g" style="left:1030.91px;top:153.21px"><i style="transform:scaleX(0.4726)">R</i></span></div>
<div class="word"><span class="g" style="left:375.87px;top:358.01px"><i style="transform:scaleX(0.5116)">V</i></span><span class="g" style="left:470.92px;top:358.01px"><i style="transform:scaleX(0.4719)">I</i></span><span class="g" style="left:521.14px;top:358.01px"><i style="transform:scaleX(0.4526)">N</i></span><span class="g" style="left:633.84px;top:358.01px"><i style="transform:scaleX(0.4422)">T</i></span><span class="g" style="left:719.99px;top:358.01px"><i style="transform:scaleX(0.5004)">A</i></span><span class="g m" style="left:817.50px;top:369.49px"><i style="transform:scaleX(0.6864)">G</i></span><span class="g" style="left:919.28px;top:358.01px"><i style="transform:scaleX(0.4078)">E</i></span></div>
<div class="word"><span class="g m" style="left:467.79px;top:574.69px"><i style="transform:scaleX(0.6613)">S</i></span><span class="g" style="left:548.64px;top:563.21px"><i style="transform:scaleX(0.4422)">T</i></span><span class="g m" style="left:634.08px;top:574.69px"><i style="transform:scaleX(0.6793)">O</i></span><span class="g" style="left:735.89px;top:563.21px"><i style="transform:scaleX(0.4744)">R</i></span><span class="g" style="left:836.72px;top:563.21px"><i style="transform:scaleX(0.4037)">E</i></span></div>
</div>
<div class="gl" style="left:607px;top:158px;width:320px"></div>
<div class="gl" style="left:607px;top:303px;width:320px"></div>
<div class="gl" style="left:607px;top:508px;width:320px"></div>
<div class="gl" style="left:607px;top:713px;width:309px"></div>
<div class="gl" style="left:607px;top:753px;width:320px"></div>
<div class="gl" style="left:607.5px;top:157.3px;width:1px;height:596px"></div>
<div class="hd" style="left:679.3px;top:154.5px"></div>
<div class="hd" style="left:679.3px;top:749.5px"></div>
<div style="left:681px;top:301.2px;width:4.6px;height:4.6px;border-radius:1px;background:#3d7bf2"></div>

</div>
<div class="abs" id="dialog">
  <div id="dtitle"></div>
  <div class="t" id="dtt" style="left:11px;top:14px;font-size:17.6px;color:#000">変形効果</div>

  <!-- group 1 : 拡大・縮小 -->
  <div class="grp" style="top:92px;height:127px"></div>
  <div class="t leg" style="top:84.5px">拡大・縮小</div>
  <div class="t lbl r" style="top:128.5px">水平方向 (H) :</div>
  <div class="trk" style="top:136px"></div><div class="thumb" style="left:268.5px;top:128px"></div>
  <div class="inp" style="left:401px;top:123px"><span class="t">100%</span></div>
  <div class="t lbl r" style="top:173.5px">垂直方向 (V) :</div>
  <div class="trk" style="top:181px"></div><div class="thumb" style="left:268.5px;top:173px"></div>
  <div class="inp" style="left:401px;top:168px"><span class="t">100%</span></div>

  <!-- group 2 : 移動 -->
  <div class="grp" style="top:257px;height:127px"></div>
  <div class="t leg" style="top:249.5px">移動</div>
  <div class="t lbl r" style="top:293.5px">水平方向 (O) :</div>
  <div class="trk" style="top:301px"></div><div class="thumb" style="left:277.5px;top:293px"></div>
  <div class="inp" style="left:401px;top:288px"><span class="t">8 px</span></div>
  <div class="t lbl r" style="top:338.5px">垂直方向 (E) :</div>
  <div class="trk" style="top:346px"></div><div class="thumb" style="left:277.5px;top:338px"></div>
  <div class="inp" style="left:401px;top:333px"><span class="t">8 px</span></div>

  <!-- group 3 : 回転 -->
  <div class="grp" style="top:422px;height:106px"></div>
  <div class="t leg" style="top:414.5px">回転</div>
  <div class="t lbl r" style="top:471px">角度 (A) :</div>
  <div id="dial"><i></i></div>
  <div class="inp" style="left:225px;top:465px;width:98px"><span class="t">0°</span></div>

  <!-- group 4 : オプション -->
  <div class="grp" style="top:566px;height:217px"></div>
  <div class="t leg" style="top:558.5px">オプション</div>
  <div class="cb on" style="left:39.2px;top:598px"><svg viewBox="0 0 18 18"><path d="M4.2 9.3l3.3 3.3 6.4-7" fill="none" stroke="#fff" stroke-width="2.2"/></svg></div>
  <div class="t lbl" style="left:64.5px;top:599.3px">オブジェクトの変形 (B)</div>
  <div class="cb on" style="left:39.2px;top:636px"><svg viewBox="0 0 18 18"><path d="M4.2 9.3l3.3 3.3 6.4-7" fill="none" stroke="#fff" stroke-width="2.2"/></svg></div>
  <div class="t lbl" style="left:64.5px;top:637.3px">パターンの変形 (T)</div>
  <div class="cb" style="left:39.2px;top:673px"></div>
  <div class="t lbl" style="left:64.5px;top:674.3px">線幅と効果を拡大・縮小 (F)</div>
  <div class="cb" style="left:310.7px;top:598px"></div>
  <div class="t lbl" style="left:336px;top:599.3px">垂直軸にリフレクト (X)</div>
  <div class="cb" style="left:310.7px;top:636px"></div>
  <div class="t lbl" style="left:336px;top:637.3px">水平軸にリフレクト (Y)</div>
  <div class="cb" style="left:310.7px;top:673px"></div>
  <div class="t lbl" style="left:336px;top:674.3px">ランダム (R)</div>
  <div id="sep4"></div>
  <svg id="gridic" viewBox="0 0 30 30" width="30" height="30"><g fill="none" stroke="#5a5a5a" stroke-width="1.3"><path d="M3.5 3.5h23v23h-23zM3.5 15h23M15 3.5v23"/></g><g fill="#f0f0f0" stroke="#5a5a5a" stroke-width="1.3"><rect x="1" y="1" width="5.5" height="5.5"/><rect x="12.2" y="1" width="5.5" height="5.5"/><rect x="23.5" y="1" width="5.5" height="5.5"/><rect x="1" y="12.2" width="5.5" height="5.5"/><rect x="23.5" y="12.2" width="5.5" height="5.5"/><rect x="1" y="23.5" width="5.5" height="5.5"/><rect x="12.2" y="23.5" width="5.5" height="5.5"/><rect x="23.5" y="23.5" width="5.5" height="5.5"/></g><rect x="11.2" y="11.2" width="7.6" height="7.6" fill="#4b4b4b"/></svg>
  <div class="t lbl" style="left:210px;top:735px">コピー (S)</div>
  <div class="inp" style="left:303px;top:728px;width:98px;height:33px"><span class="t" style="top:9px">0</span></div>

  <!-- footer -->
  <div class="cb blue" style="left:23.7px;top:825.5px"><svg viewBox="0 0 18 18"><path d="M4.2 9.3l3.3 3.3 6.4-7" fill="none" stroke="#fff" stroke-width="2.4"/></svg></div>
  <div class="t lbl" style="left:48px;top:827px">プレビュー (P)</div>
  <div class="btn" id="ok"><span class="t">OK</span></div>
  <div class="btn" id="cancel"><span class="t">キャンセル</span></div>
</div>

<div class="abs" id="panel">
  <!-- top grip strip -->
  <div id="pstrip"></div>
  <svg id="pcollapse" viewBox="0 0 12 8" width="12" height="8"><path d="M4.6 .8L1.4 4l3.2 3.2M10.4 .8L7.2 4l3.2 3.2" fill="none" stroke="#1e1e1e" stroke-width="1.5"/></svg>
  <svg id="pclose" viewBox="0 0 10 10" width="10" height="10"><path d="M.7 .7l8.6 8.6M9.3 .7L.7 9.3" fill="none" stroke="#5a5a5a" stroke-width="1.9"/></svg>
  <div id="pline1"></div>

  <!-- appearance tab row -->
  <div class="tabrow" style="top:21px;height:40px"></div>
  <div class="tab" style="top:21px;width:106px;height:40px"><span class="t nar" style="left:15px;top:10.5px">アピアランス</span></div>
  <svg class="burger" style="top:35.3px" viewBox="0 0 16 11" width="16" height="11"><path d="M0 1h16M0 5.5h16M0 10h16" stroke="#808080" stroke-width="1.25"/></svg>

  <!-- list box -->
  <div id="plist">
    <div class="row" style="top:0;height:36.8px"></div>
    <div class="row" style="top:36.8px;height:37.4px"></div>
    <div class="row" style="top:74.2px;height:37.6px"></div>
    <div class="row sel" style="top:111.8px;height:36.3px"></div>
    <div class="row" style="top:148.1px;height:38.4px"></div>
    <div class="row" style="top:186.5px;height:37.7px"></div>
    <div class="vsep" style="top:36.8px;height:111.3px"></div>
    <div class="vsep" style="top:188.5px;height:34.5px"></div>

    <div class="sw" style="left:2.5px;top:2.2px;width:30px;height:30px;background:#eff0c0;border-width:1.5px;box-shadow:inset 0 0 0 1px #fff"></div>
    <div class="t pl b" style="left:74.5px;top:10.5px;letter-spacing:.6px">テキスト</div>

    <svg class="eye" style="top:49.5px" viewBox="0 0 20 12" width="20" height="12"><path d="M.3 6C3 1.6 6.4 .2 10 .2S17 1.6 19.7 6C17 10.400 13.600 11.800 10 11.800S3 10.400 .3 6z" fill="#4b4b4b"/><circle cx="10" cy="6" r="4.300" fill="#f0f0f0"/><circle cx="10" cy="6" r="2.700" fill="#4b4b4b"/><circle cx="11.200" cy="4.800" r="1" fill="#f0f0f0"/></svg>
    <svg class="chev" style="top:49px" viewBox="0 0 8 13" width="8" height="13"><path d="M1.200 1l5.300 5.500L1.200 12" fill="none" stroke="#3c3c3c" stroke-width="1.900"/></svg>
    <div class="t pl dot" style="left:75px;top:47px;color:#4b4b4b">線 :</div>
    <div class="sw2" style="left:175.5px;top:42px"><svg viewBox="0 0 27 27" width="27" height="27"><rect x=".5" y=".5" width="26" height="26" fill="#fff" stroke="#5f5f5f"/><rect x="3.500" y="3.500" width="20" height="20" fill="#fff" stroke="#5f5f5f"/><path d="M7 20.500L20 6.500" stroke="#d9001b" stroke-width="3.200"/></svg></div>

    <svg class="eye" style="top:87px" viewBox="0 0 20 12" width="20" height="12"><path d="M.3 6C3 1.6 6.4 .2 10 .2S17 1.6 19.7 6C17 10.400 13.600 11.800 10 11.800S3 10.400 .3 6z" fill="#4b4b4b"/><circle cx="10" cy="6" r="4.300" fill="#f0f0f0"/><circle cx="10" cy="6" r="2.700" fill="#4b4b4b"/><circle cx="11.200" cy="4.800" r="1" fill="#f0f0f0"/></svg>
    <svg class="chev" style="top:86.500px" viewBox="0 0 8 13" width="8" height="13"><path d="M1.200 1l5.300 5.500L1.200 12" fill="none" stroke="#3c3c3c" stroke-width="1.900"/></svg>
    <div class="t pl" style="left:75.5px;top:84.5px;word-spacing:4px">塗り :</div>
    <div class="sw" style="left:178.5px;top:82.5px;width:21px;height:21px;background:#eff0c0;box-shadow:inset 0 0 0 2px #fff"></div>

    <svg class="eye" style="top:124.5px" viewBox="0 0 20 12" width="20" height="12"><path d="M.3 6C3 1.6 6.4 .2 10 .2S17 1.6 19.7 6C17 10.400 13.600 11.800 10 11.800S3 10.400 .3 6z" fill="#4b4b4b"/><circle cx="10" cy="6" r="4.300" fill="#b9d0ed"/><circle cx="10" cy="6" r="2.700" fill="#4b4b4b"/><circle cx="11.200" cy="4.800" r="1" fill="#b9d0ed"/></svg>
    <svg class="chev" style="top:124px" viewBox="0 0 8 13" width="8" height="13"><path d="M1.200 1l5.300 5.500L1.200 12" fill="none" stroke="#3c3c3c" stroke-width="1.900"/></svg>
    <div class="t pl" style="left:75.5px;top:122px;word-spacing:4px">塗り :</div>
    <div id="selsw"><i></i><b></b><svg viewBox="0 0 12 7" width="12" height="7"><path d="M.8 .8L6 5.800 11.200 .8" fill="none" stroke="#323232" stroke-width="1.600"/></svg></div>

    <div class="t pl" style="left:75.5px;top:159.5px">文字</div>

    <svg class="eye" style="top:200px;opacity:.33" viewBox="0 0 20 12" width="20" height="12"><path d="M.3 6C3 1.6 6.4 .2 10 .2S17 1.6 19.7 6C17 10.400 13.600 11.800 10 11.800S3 10.400 .3 6z" fill="#4b4b4b"/><circle cx="10" cy="6" r="4.300" fill="#f0f0f0"/><circle cx="10" cy="6" r="2.700" fill="#4b4b4b"/><circle cx="11.200" cy="4.800" r="1" fill="#f0f0f0"/></svg>
    <div class="t pl dot" style="left:75.5px;top:197.5px;color:#4b4b4b">不透明度 :</div>
    <div class="t pl" style="left:200.5px;top:197.5px">初期設定</div>
  </div>

  <!-- list footer icons -->
  <svg class="fi" style="left:19px;top:440px" viewBox="0 0 17 17" width="17" height="17"><rect x="1.300" y="1.300" width="14.400" height="14.400" rx="1" fill="none" stroke="#4b4b4b" stroke-width="2.400"/></svg>
  <svg class="fi" style="left:58px;top:440px" viewBox="0 0 17 17" width="17" height="17"><rect x=".7" y=".7" width="15.600" height="15.600" rx="1" fill="#fff" stroke="#4b4b4b" stroke-width="1.300"/><rect x="3.200" y="3.200" width="10.600" height="10.600" fill="#4b4b4b"/></svg>
  <div class="t" id="fx" style="left:96px;top:435px">fx<svg viewBox="0 0 5 3" width="5" height="3"><path d="M0 0h5L2.500 3z" fill="#4b4b4b"/></svg></div>
  <svg class="fi" style="left:265px;top:440px" viewBox="0 0 17 17" width="17" height="17"><circle cx="8.500" cy="8.500" r="6.800" fill="none" stroke="#4b4b4b" stroke-width="2.300"/><path d="M3.800 3.800l9.400 9.400" stroke="#4b4b4b" stroke-width="2.300"/></svg>
  <svg class="fi" style="left:304.500px;top:440px" viewBox="0 0 16 16" width="16" height="16"><path d="M1 .5h13.500a1 1 0 0 1 1 1V14a1 1 0 0 1-1 1H7V7.500H0V1.500a1 1 0 0 1 1-1z" fill="#4b4b4b"/><path d="M1.200 8.800h4.600v4.600z" fill="#4b4b4b"/></svg>
  <svg class="fi" style="left:343px;top:438.500px" viewBox="0 0 16 18" width="16" height="18"><path d="M.5 4h15M5 3.500V1.500a.8 .8 0 0 1 .8-.8h4.400a.8 .8 0 0 1 .8 .8v2" fill="none" stroke="#4b4b4b" stroke-width="1.500"/><path d="M2 4.500h12V16a1.200 1.200 0 0 1-1.200 1.200H3.200A1.200 1.200 0 0 1 2 16z" fill="none" stroke="#4b4b4b" stroke-width="1.500"/><path d="M5.300 7v7.500M8 7v7.500M10.700 7v7.500" stroke="#4b4b4b" stroke-width="1.400"/></svg>

  <!-- divider between panels -->
  <div id="pdiv"></div>

  <!-- colour tab row -->
  <div class="tabrow" style="top:468px;height:40px"></div>
  <div class="tab" style="top:468px;width:77.5px;height:40px"><svg style="left:8.500px;top:15px" viewBox="0 0 8 13" width="8" height="13"><path d="M.8 4.600L4 1.200l3.200 3.400M.8 8.400L4 11.800l3.200-3.400" fill="none" stroke="#4b4b4b" stroke-width="1.300"/></svg><span class="t nar" style="left:23px;top:11.500px">カラー</span></div>
  <svg class="burger" style="top:482.3px" viewBox="0 0 16 11" width="16" height="11"><path d="M0 1h16M0 5.500h16M0 10h16" stroke="#6e6e6e" stroke-width="1.400"/></svg>

  <!-- colour controls -->
  <svg style="left:9.500px;top:518px" viewBox="0 0 16 16" width="16" height="16"><rect x="5.200" y="5.200" width="9.600" height="9.600" rx="1" fill="#000"/><rect x="1" y="1" width="9.600" height="9.600" rx="1.500" fill="#fff" stroke="#000" stroke-width="1.800"/></svg>
  <svg style="left:39.500px;top:518.500px" viewBox="0 0 17 17" width="17" height="17"><path d="M3.200 6.500C6.500 2.500 12 4.200 11.800 10.500" fill="none" stroke="#3c3c3c" stroke-width="2.300"/><path d="M0 6.200L5.800 1.200 5.500 8.200z" fill="#3c3c3c"/><path d="M7.800 10.200h8.400L11.900 16z" fill="#3c3c3c"/></svg>
  <div id="stroke"><svg viewBox="0 0 30 30" width="30" height="30"><rect x=".5" y=".5" width="29" height="29" fill="#fff" stroke="#6e6e6e"/><rect x="9" y="9" width="12" height="12" fill="#c8c8c8" stroke="#6e6e6e" stroke-width="1.500"/><path d="M1 29L29 1" stroke="#f00" stroke-width="2.600"/></svg></div>
  <div id="fill"></div>
  <svg style="left:17px;top:610.500px" viewBox="0 0 18 19" width="18" height="19"><path d="M9 1L16.800 5v9L9 18 1.200 14V5z" fill="#fff" stroke="#5f5f5f" stroke-width="1.300"/><path d="M1.200 5L9 9v9L1.200 14z" fill="#d2d2d2" stroke="#5f5f5f" stroke-width="1.300"/><path d="M16.800 5L9 9v9l7.800-4z" fill="#b4b4b4" stroke="#5f5f5f" stroke-width="1.300"/></svg>
  <div class="sw" style="left:44.500px;top:608px;width:22px;height:22px;background:#333;box-shadow:inset 0 0 0 1px #fff"></div>

  <div class="t ch" style="top:527px">R</div>
  <div class="ctrk" style="top:532px;background:linear-gradient(90deg,#002f2f,#ff2f2f)"></div>
  <svg class="cth" style="top:538px" viewBox="0 0 14 12" width="14" height="12"><path d="M7 0l6.300 6.300V9.500a2.300 2.300 0 0 1-2.300 2.300H3A2.300 2.300 0 0 1 .7 9.500V6.300z" fill="#505050"/></svg>
  <div class="cinp" style="top:520px"><span class="t">47</span></div>

  <div class="t ch" style="top:576.500px;left:78px">G</div>
  <div class="ctrk" style="top:581.500px;background:linear-gradient(90deg,#2f002f,#2fff2f)"></div>
  <svg class="cth" style="top:587.500px" viewBox="0 0 14 12" width="14" height="12"><path d="M7 0l6.300 6.300V9.500a2.300 2.300 0 0 1-2.300 2.300H3A2.300 2.300 0 0 1 .7 9.500V6.300z" fill="#505050"/></svg>
  <div class="cinp" style="top:570px"><span class="t">47</span></div>

  <div class="t ch" style="top:626px">B</div>
  <div class="ctrk" style="top:631px;background:linear-gradient(90deg,#2f2f00,#2f2fff)"></div>
  <svg class="cth" style="top:637px" viewBox="0 0 14 12" width="14" height="12"><path d="M7 0l6.300 6.300V9.500a2.300 2.300 0 0 1-2.300 2.300H3A2.300 2.300 0 0 1 .7 9.500V6.300z" fill="#505050"/></svg>
  <div class="cinp" style="top:619.500px"><span class="t">47</span></div>

  <div id="mini"><svg viewBox="0 0 60 21" width="60" height="21"><rect x=".5" y=".5" width="59" height="20" fill="#fff" stroke="#6e6e6e"/><rect x="20" y="1" width="20" height="19" fill="#0a0404"/><path d="M1.500 19.500L19 1.500" stroke="#f00" stroke-width="2.400"/></svg></div>
  <div class="t" style="left:262.500px;top:680px;font-size:18px;color:#4b4b4b">#</div>
  <div class="cinp" style="left:280.500px;top:675px;width:97px;height:30px"><span class="t" style="left:6.500px;top:7px;letter-spacing:.3px">2F2F2F</span></div>

  <div id="spec"><i></i></div>

  <div id="pfoot"></div>
  <div id="pgrip"></div>
</div>

<div class="abs" id="vscroll">
  <svg style="left:7px;top:9.5px" viewBox="0 0 12 7" width="12" height="7"><path d="M.7 6.300L6 1l5.300 5.300" fill="none" stroke="#8a8a8a" stroke-width="1.400"/></svg>
  <div id="vthumb"></div>
  <svg style="left:7px;top:957.500px" viewBox="0 0 12 7" width="12" height="7"><path d="M.7 .7L6 6l5.300-5.300" fill="none" stroke="#6e6e6e" stroke-width="1.400"/></svg>
</div>
<div class="abs" id="status">
  <div class="sinp" style="left:7px;width:75px"><span class="t" style="left:4px">43.89%</span></div>
  <div class="sdrop" style="left:82px;width:27px"><svg style="left:7px;top:11px" viewBox="0 0 12 7" width="12" height="7"><path d="M.7 .7L6 6l5.300-5.300" fill="none" stroke="#323232" stroke-width="1.600"/></svg></div>
  <svg style="left:122px;top:7.500px" viewBox="0 0 12 12" width="12" height="12"><path d="M0 0h2.200v12H0zM11.500 0v12L3.200 6z" fill="#b4b4b4"/></svg>
  <svg style="left:149px;top:7.500px" viewBox="0 0 9 12" width="9" height="12"><path d="M8.500 0v12L.3 6z" fill="#b4b4b4"/></svg>
  <div class="sinp" style="left:172px;width:61px"><span class="t" style="left:5px">1</span></div>
  <div class="sdrop" style="left:233px;width:26px"><svg style="left:6.500px;top:11px" viewBox="0 0 12 7" width="12" height="7"><path d="M.7 .7L6 6l5.300-5.300" fill="none" stroke="#323232" stroke-width="1.600"/></svg></div>
  <svg style="left:273.500px;top:7.500px" viewBox="0 0 9 12" width="9" height="12"><path d="M.5 0v12L8.700 6z" fill="#b4b4b4"/></svg>
  <svg style="left:296.500px;top:7.500px" viewBox="0 0 12 12" width="12" height="12"><path d="M9.800 0H12v12H9.800zM.5 0v12L8.800 6z" fill="#b4b4b4"/></svg>
  <div id="ssep"></div>
  <div class="t" style="left:456.500px;top:6.500px;font-size:15.500px;color:#3c3c3c">選択</div>
  <svg style="left:631.500px;top:6.500px" viewBox="0 0 9 12" width="9" height="12"><path d="M.3 0v12L8.700 6z" fill="#323232"/></svg>
  <div id="hscroll">
    <svg style="left:12.500px;top:7px" viewBox="0 0 8 12" width="8" height="12"><path d="M7 .7L1.200 6 7 11.300" fill="none" stroke="#5f5f5f" stroke-width="1.400"/></svg>
    <div id="hthumb"></div>
    <svg style="left:724px;top:7px" viewBox="0 0 8 12" width="8" height="12"><path d="M1 .7L6.800 6 1 11.300" fill="none" stroke="#5f5f5f" stroke-width="1.400"/></svg>
  </div>
  <div id="corner"></div>
</div>

</body>
</html>
